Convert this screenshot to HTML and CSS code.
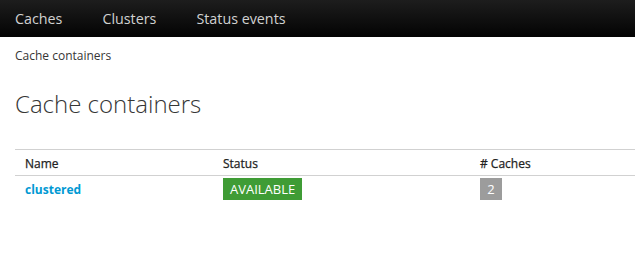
FILE: index.html
```html
<!DOCTYPE html>
<html lang="en">
<head>
  <meta charset="UTF-8">
  <title>Cache containers</title>
  <link rel="stylesheet" href="styles.css">
</head>
<body>
  <nav class="navbar">
    <a href="#">Caches</a>
    <a href="#">Clusters</a>
    <a href="#">Status events</a>
  </nav>

  <div class="content">
    <ol class="breadcrumb">
      <li>Cache containers</li>
    </ol>
    <h1>Cache containers</h1>

    <table class="containers">
      <thead>
        <tr>
          <th class="col-name">Name</th>
          <th class="col-status">Status</th>
          <th># Caches</th>
        </tr>
      </thead>
      <tbody>
        <tr>
          <td><a class="name-link" href="#">clustered</a></td>
          <td><span class="label-ok">AVAILABLE</span></td>
          <td><span class="badge">2</span></td>
        </tr>
      </tbody>
    </table>
  </div>
</body>
</html>
```

FILE: styles.css
```css
body {
  margin: 0;
  font-family: "Open Sans", "Liberation Sans", sans-serif;
  font-size: 12px;
  color: #363636;
  background: white;
  overflow: hidden;
}
.navbar {
  display: flex;
  height: 37px;
  align-items: center;
  background: linear-gradient(#1d1d1d, #030303);
  padding-left: 15px;
}
.navbar a {
  color: #d1d1d1;
  text-decoration: none;
  font-size: 14.3px;
  margin-right: 40px;
}
.content {
  padding-left: 15px;
  width: 700px;
}
.breadcrumb {
  list-style: none;
  margin: 11px 0 0;
  padding: 0;
  line-height: 16px;
}
h1 {
  margin: 26px 0 0;
  font-size: 24px;
  font-weight: 300;
  line-height: 28px;
}
.containers {
  margin-top: 31px;
  width: 100%;
  border-collapse: collapse;
  border-top: 1px solid #d1d1d1;
}
.containers th {
  text-align: left;
  font-weight: 400;
  color: #222;
  -webkit-text-stroke: 0.25px #222;
  padding: 5px 10px 3px;
  height: 17px;
  border-bottom: 1px solid #d1d1d1;
}
.containers td {
  padding: 2px 8px 0 10px;
  height: 22px;
}
.col-name {
  width: 178px;
}
.col-status {
  width: 237px;
}
.name-link {
  color: #0099d3;
  font-weight: 700;
  text-decoration: none;
}
.label-ok {
  display: inline-block;
  background: #3f9c35;
  color: white;
  font-size: 13px;
  line-height: 22px;
  padding: 0 7px;
}
.badge {
  display: inline-block;
  background: #9c9c9c;
  color: white;
  font-size: 13px;
  line-height: 22px;
  width: 22px;
  text-align: center;
}
```
